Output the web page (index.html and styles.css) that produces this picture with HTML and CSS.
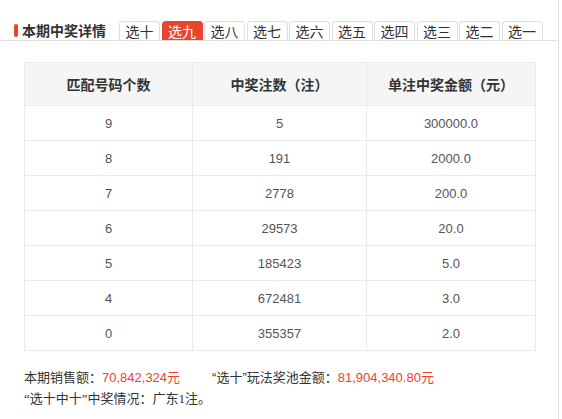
FILE: index.html
```html
<!DOCTYPE html>
<html lang="zh-CN">
<head>
<meta charset="utf-8">
<title>本期中奖详情</title>
<link rel="stylesheet" href="styles.css">
</head>
<body>
<div class="page">
  <div class="head">
    <h2 class="title"><span class="bar"></span>本期中奖详情</h2>
    <ul class="tabs">
      <li class="tab">选十</li>
      <li class="tab active">选九</li>
      <li class="tab">选八</li>
      <li class="tab">选七</li>
      <li class="tab">选六</li>
      <li class="tab">选五</li>
      <li class="tab">选四</li>
      <li class="tab">选三</li>
      <li class="tab">选二</li>
      <li class="tab">选一</li>
    </ul>
  </div>
  <table class="prize">
    <colgroup><col class="c1"><col class="c2"><col class="c3"></colgroup>
    <thead>
      <tr><th>匹配号码个数</th><th>中奖注数（注）</th><th>单注中奖金额（元）</th></tr>
    </thead>
    <tbody>
      <tr><td>9</td><td>5</td><td>300000.0</td></tr>
      <tr><td>8</td><td>191</td><td>2000.0</td></tr>
      <tr><td>7</td><td>2778</td><td>200.0</td></tr>
      <tr><td>6</td><td>29573</td><td>20.0</td></tr>
      <tr><td>5</td><td>185423</td><td>5.0</td></tr>
      <tr><td>4</td><td>672481</td><td>3.0</td></tr>
      <tr><td>0</td><td>355357</td><td>2.0</td></tr>
    </tbody>
  </table>
  <p class="summary"><span>本期销售额：<em class="red">70,842,324元</em></span><span class="pool">“选十”玩法奖池金额：<em class="red">81,904,340.80元</em></span></p>
  <p class="note">“选十中十”中奖情况：广东1注。</p>
</div>
</body>
</html>
```
FILE: styles.css
```css
html, body {
  margin: 0;
  padding: 0;
  background: #fff;
}
body {
  font-family: "Liberation Sans", "Noto Sans CJK SC", sans-serif;
  color: #333;
}
.page {
  width: 559px;
  height: 419px;
  border-right: 1px solid #ddd;
  box-sizing: border-box;
  overflow: hidden;
}
.head {
  display: flex;
  align-items: flex-end;
  height: 41px;
  width: 557px;
  box-sizing: border-box;
  padding-left: 14px;
  border-bottom: 1px solid #ddd;
}
.title {
  display: flex;
  align-items: center;
  margin: 0;
  height: 19px;
  font-size: 14px;
  font-weight: bold;
  line-height: 19px;
  color: #333;
  font-family: "Noto Sans CJK SC", sans-serif;
}
.bar {
  display: block;
  width: 4px;
  height: 13px;
  border-radius: 2px;
  background: #e8432d;
  margin-right: 4px;
}
.tabs {
  display: flex;
  gap: 1.5px;
  list-style: none;
  margin: 0 0 0 13px;
  padding: 0;
}
.tab {
  width: 41px;
  height: 19px;
  box-sizing: border-box;
  border: 1px solid #ddd;
  border-bottom: none;
  border-radius: 4px 4px 0 0;
  font-size: 14px;
  line-height: 18px;
  text-align: center;
  color: #333;
  font-family: "Noto Sans CJK SC", sans-serif;
}
.tab.active {
  background: #e8452d;
  border-color: #e8452d;
  color: #fff;
}
.prize {
  margin: 21px 0 0 24px;
  width: 511px;
  border-collapse: collapse;
  table-layout: fixed;
  border: 1px solid #ebebeb;
}
.c1 { width: 168px; }
.c2 { width: 174px; }
.c3 { width: 169px; }
.prize th, .prize td {
  border: 1px solid #ebebeb;
  padding: 0;
  text-align: center;
}
.prize thead tr {
  height: 43px;
}
.prize th {
  background: #f5f5f5;
  font-size: 14px;
  font-weight: bold;
  color: #333;
  font-family: "Noto Sans CJK SC", sans-serif;
}
.prize tbody tr {
  height: 35px;
}
.prize td {
  font-size: 13px;
  color: #555;
}
.summary, .note {
  margin: 0;
  padding-left: 24px;
  font-size: 13px;
  line-height: 21px;
  color: #333;
}
.summary {
  margin-top: 16px;
}
.red {
  font-style: normal;
  color: #f0412f;
}
.pool {
  margin-left: 32px;
}
.note {
  font-family: "Liberation Serif", "Noto Sans CJK SC", serif;
}
```
